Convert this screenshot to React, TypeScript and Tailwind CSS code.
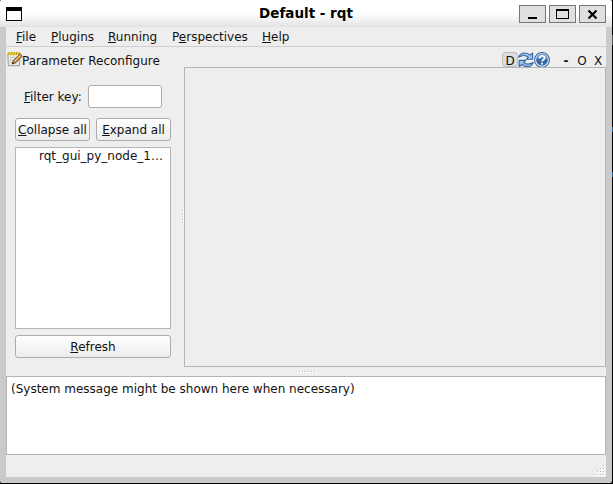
import type { ReactNode } from "react";

function Key({ children }: { children: ReactNode }) {
  return <span className="underline decoration-1 underline-offset-[1px] [text-decoration-skip-ink:none]">{children}</span>;
}

function WindowButton({ children }: { children: ReactNode }) {
  return (
    <button className="h-[18px] w-[27px] border border-[#777777] bg-[#e0e0e0]">
      <svg width="25" height="16" viewBox="0 0 25 16" shapeRendering="crispEdges">{children}</svg>
    </button>
  );
}

function PushButton({ className, children }: { className: string; children: ReactNode }) {
  return (
    <button className={`h-[23px] whitespace-nowrap rounded-[3px] border border-[#acacac] bg-linear-to-b from-white to-[#ececec] pt-px leading-[21px] ${className}`}>
      {children}
    </button>
  );
}

function NotepadIcon() {
  return (
    <svg width="16" height="16" viewBox="0 0 16 16" className="shrink-0">
      <path d="M.8 2.5h12l-.3 12.2H1.3z" fill="#e9eae6" stroke="#9a9c94" />
      <path d="M3 6.5h7M3 9h5M3 11.5h3" stroke="#c2c4bd" />
      <path d="M.8 1h12v3.2h-12z" fill="#efd850" />
      <path d="M1.5 4l1-3M4 4l1-3M6.5 4l1-3M9 4l1-3M11.5 4l1-3" stroke="#a98708" strokeWidth=".8" />
      <path d="M5.3 12.8l1.2-3.4 6.8-6.4 1.9 2.2-6.4 6.6z" fill="#d28f45" stroke="#654020" strokeWidth=".9" />
      <path d="M7.5 10l6-5.6" stroke="#ffd79a" />
      <path d="M5 13l.7-2 1.4 1.3z" fill="#292929" />
    </svg>
  );
}

function ReloadIcon() {
  return (
    <svg width="16" height="15" viewBox="0 0 16 15" className="shrink-0">
      <g fill="#9fc1e6" stroke="#3468a8" strokeWidth="1.1" strokeLinejoin="round">
        <path d="M.6 5.2C2 1.8 4.6.8 7.2 1c2.2.1 3.6.8 4.9 2.1L14.6.8V7.3H8.2l2-2.1C8.2 3.4 4.2 3.2.6 5.2z" />
        <path d="M15.4 10.6c-1.4 3.2-4 4.2-6.6 4-2.2-.1-3.6-.8-4.9-2.1L1.2 14.8V8.4h6.6l-2 2.1c2 1.8 6 2 9.6.1z" />
      </g>
    </svg>
  );
}

function HelpIcon() {
  return (
    <svg width="16" height="15" viewBox="0 0 16 15" className="shrink-0">
      <circle cx="8" cy="7.9" r="7.4" fill="#f4f8fc" stroke="#3564a4" strokeWidth="1.1" />
      <circle cx="8" cy="7.9" r="5.9" fill="#3769aa" />
      <path d="M2.2 7.4A5.8 5.8 0 0 1 13.8 7.4Q8 5.6 2.2 7.4z" fill="#6f98c9" />
      <path d="M5.6 6.2C5.6 3 10.6 3 10.6 5.9c0 1.9-2.5 1.9-2.5 3.6" fill="none" stroke="#fff" strokeWidth="1.7" />
      <path d="M7.2 10.7H9v1.7H7.2z" fill="#fff" />
    </svg>
  );
}

function Grip({ vertical = false }: { vertical?: boolean }) {
  return (
    <div className={`flex gap-px ${vertical ? "flex-col" : ""}`}>
      {[0, 1, 2, 3, 4, 5].map((i) => (
        <div key={i} className="h-[2px] w-[2px] bg-white">
          <div className="size-px bg-[#b0b0b0]" />
        </div>
      ))}
    </div>
  );
}

const gripDots = [[9, 0], [6, 3], [9, 3], [3, 6], [6, 6], [9, 6], [0, 9], [3, 9], [6, 9], [9, 9]];

export default function App() {
  return (
    <div className="relative h-[484px] w-[613px] bg-black pr-px pb-px">
      <div className="absolute top-[127px] right-0 h-[5px] w-px bg-[#245c8c]" />
      <div className="absolute top-[172px] right-0 h-[5px] w-px bg-[#245c8c]" />
      <div className="absolute top-[35px] right-0 h-[10px] w-px bg-[#555555]" />
      <div className="flex h-[483px] flex-col overflow-hidden rounded-[2px] bg-[#cacaca] font-['DejaVu_Sans',sans-serif] text-[12px] leading-[14px] text-[#111111]">
        <header className="flex h-[27px] shrink-0 items-start bg-linear-to-b from-white from-50% to-[#e2e2e2] pl-[6px]">
          <div className="mt-[7px] h-[14px] w-4 border border-t-4 border-black bg-white" />
          <h1 className="flex-1 pt-[5px] pl-[121px] text-center text-[13.5px] leading-[17px] font-bold whitespace-nowrap text-black">Default - rqt</h1>
          <div className="mt-[5px] mr-[6px] flex gap-[3px] pl-[50px]">
            <WindowButton><path d="M8 11h9v2H8z" /></WindowButton>
            <WindowButton><path d="M6 3h13v10H6zM7 5v7h11V5z" fillRule="evenodd" /></WindowButton>
            <WindowButton><path d="M8.5 4.5l8 8M16.5 4.5l-8 8" stroke="#000" strokeWidth="2.2" shapeRendering="auto" /></WindowButton>
          </div>
        </header>
        <main className="mr-[6px] ml-[6px] flex h-[450px] shrink-0 flex-col bg-[#eeeeee]">
          <nav className="flex h-5 shrink-0 border-b border-[#cfcfcf] pt-[3px] pl-[10px] whitespace-nowrap">
            <span className="w-[35px]"><Key>F</Key>ile</span>
            <span className="w-[57px]"><Key>P</Key>lugins</span>
            <span className="w-16"><Key>R</Key>unning</span>
            <span className="w-[90px]">P<Key>e</Key>rspectives</span>
            <span><Key>H</Key>elp</span>
          </nav>
          <div className="flex h-5 shrink-0 items-end justify-between pl-px">
            <div className="flex items-end">
              <NotepadIcon />
              <span className="-ml-px h-[13px] whitespace-nowrap">Parameter Reconfigure</span>
            </div>
            <div className="flex items-end">
              <span className="h-[15px] w-4 rounded-[3px] border border-[#bdbdbd] bg-[#dddddd] text-center leading-[16px]">D</span>
              <ReloadIcon />
              <HelpIcon />
              <span className="ml-2 h-[13px] w-4 text-center font-bold">-</span>
              <span className="h-[13px] w-4 text-center">O</span>
              <span className="h-[13px] w-4 text-center">X</span>
            </div>
          </div>
          <section className="flex h-[300px] shrink-0">
            <div className="w-[174px] shrink-0 pl-[9px]">
              <div className="flex pt-[18px] pl-[9px]">
                <label htmlFor="filter" className="w-16 pt-[5px] whitespace-nowrap"><Key>F</Key>ilter key:</label>
                <input id="filter" className="h-[23px] w-[74px] rounded-[3px] border border-[#acacac] bg-white px-1 outline-none" />
              </div>
              <div className="mt-[10px] flex gap-[6px]">
                <PushButton className="w-[75px]"><Key>C</Key>ollapse all</PushButton>
                <PushButton className="w-[75px]"><Key>E</Key>xpand all</PushButton>
              </div>
              <div className="mt-[6px] h-[182px] w-[156px] border border-[#b5b5b5] bg-white pt-[1px] pl-[23px] whitespace-nowrap">rqt_gui_py_node_1…</div>
              <PushButton className="mt-[6px] w-[156px]"><Key>R</Key>efresh</PushButton>
            </div>
            <div className="flex w-1 items-center pt-[2px] pl-[2px]"><Grip vertical /></div>
            <div className="w-[422px] border border-[#b5b5b5]" />
          </section>
          <div className="flex h-[9px] shrink-0 justify-center pt-1 pl-[2px]"><Grip /></div>
          <section className="h-[79px] shrink-0 border border-[#b5b5b5] bg-white pt-[5px] pl-1">(System message might be shown here when necessary)</section>
          <footer className="flex h-[22px] shrink-0 items-end justify-end pr-px pb-px">
            <svg width="11" height="11" shapeRendering="crispEdges">
              {gripDots.map(([x, y]) => <g key={`${x}-${y}`}><path d={`M${x} ${y}h2v2h-2z`} fill="#fff" /><path d={`M${x} ${y}h1v1h-1z`} fill="#b0b0b0" /></g>)}
            </svg>
          </footer>
        </main>
      </div>
    </div>
  );
}
